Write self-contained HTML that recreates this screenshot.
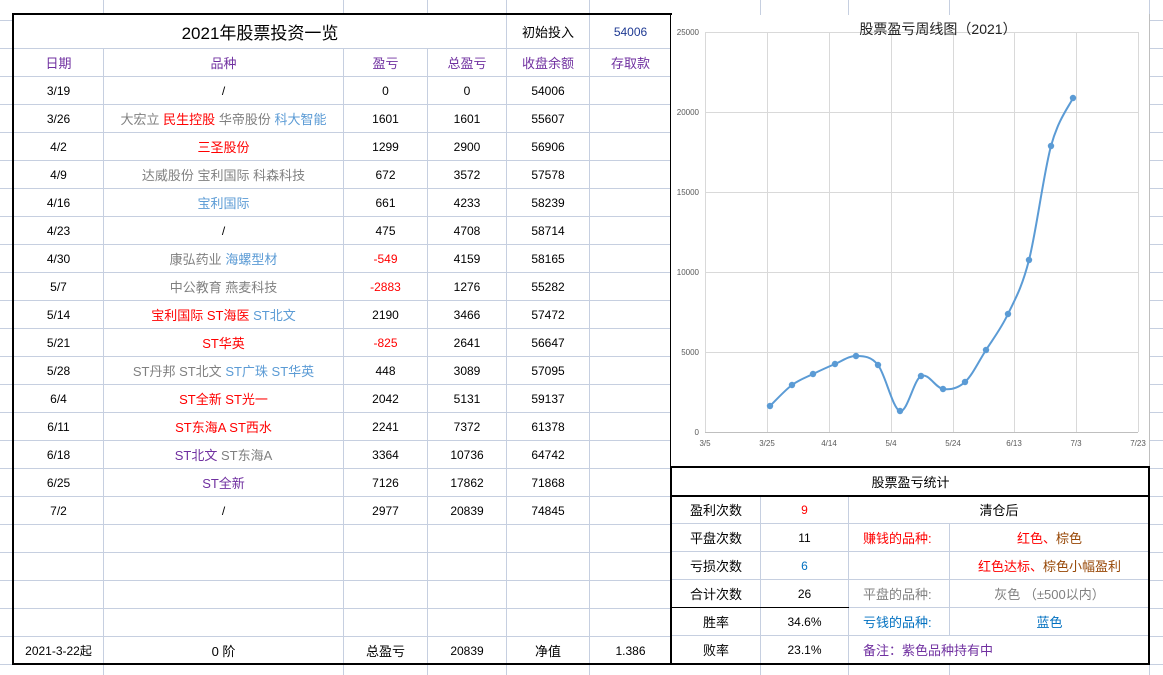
<!DOCTYPE html>
<html><head><meta charset="utf-8">
<style>
*{margin:0;padding:0;box-sizing:border-box}
body{width:1163px;height:675px;position:relative;overflow:hidden;background:#fff;
font-family:"Liberation Sans","Noto Sans CJK SC",sans-serif;font-size:12px;color:#000}
.bg{position:absolute;left:0;top:0;width:1163px;height:675px;
background-image:linear-gradient(#c6cfe0 1px,transparent 1px);background-size:100% 28px;background-position:0 20px}
.vl{position:absolute;top:0;width:1px;background:#c6cfe0;height:675px}
table{position:absolute;border-collapse:collapse;table-layout:fixed;background:#fff}
td{border:1px solid #c6cfe0;text-align:center;vertical-align:middle;white-space:nowrap;padding:0;height:28px;overflow:hidden}
.r{color:#f00}.g{color:#808080}.b{color:#5b9bd5}.p{color:#7030a0}.bl{color:#0070c0}.br{color:#974706}
.frame{position:absolute;border:2px solid #000;pointer-events:none}
</style></head><body>
<div class="bg"></div>
<div class="vl" style="left:103px"></div><div class="vl" style="left:343px"></div>
<div class="vl" style="left:427px"></div><div class="vl" style="left:506px"></div>
<div class="vl" style="left:589px"></div><div class="vl" style="left:760px"></div>
<div class="vl" style="left:848px"></div><div class="vl" style="left:949px"></div>
<div class="vl" style="left:1149px"></div>

<table style="left:13px;top:14px;width:658px">
<colgroup><col style="width:90px"><col style="width:240px"><col style="width:84px"><col style="width:79px"><col style="width:83px"><col style="width:82px"></colgroup>
<tr style="height:34px"><td colspan="4" style="height:34px;font-size:17px">2021年股票投资一览</td><td style="border-left:1px solid #000;font-size:13px">初始投入</td><td style="color:#1f3a93">54006</td></tr>
<tr class="p" style="font-size:13px"><td>日期</td><td>品种</td><td>盈亏</td><td>总盈亏</td><td style="border-left:1px solid #000">收盘余额</td><td>存取款</td></tr>
<tr><td>3/19</td><td>/</td><td>0</td><td>0</td><td style="border-left:1px solid #000">54006</td><td></td></tr>
<tr><td>3/26</td><td style="font-size:13px"><span class="g">大宏立</span> <span class="r">民生控股</span> <span class="g">华帝股份</span> <span class="b">科大智能</span></td><td>1601</td><td>1601</td><td style="border-left:1px solid #000">55607</td><td></td></tr>
<tr><td>4/2</td><td class="r" style="font-size:13px">三圣股份</td><td>1299</td><td>2900</td><td style="border-left:1px solid #000">56906</td><td></td></tr>
<tr><td>4/9</td><td class="g" style="font-size:13px">达威股份 宝利国际 科森科技</td><td>672</td><td>3572</td><td style="border-left:1px solid #000">57578</td><td></td></tr>
<tr><td>4/16</td><td class="b" style="font-size:13px">宝利国际</td><td>661</td><td>4233</td><td style="border-left:1px solid #000">58239</td><td></td></tr>
<tr><td>4/23</td><td>/</td><td>475</td><td>4708</td><td style="border-left:1px solid #000">58714</td><td></td></tr>
<tr><td>4/30</td><td style="font-size:13px"><span class="g">康弘药业</span> <span class="b">海螺型材</span></td><td class="r">-549</td><td>4159</td><td style="border-left:1px solid #000">58165</td><td></td></tr>
<tr><td>5/7</td><td class="g" style="font-size:13px">中公教育 燕麦科技</td><td class="r">-2883</td><td>1276</td><td style="border-left:1px solid #000">55282</td><td></td></tr>
<tr><td>5/14</td><td style="font-size:13px"><span class="r">宝利国际 ST海医</span> <span class="b">ST北文</span></td><td>2190</td><td>3466</td><td style="border-left:1px solid #000">57472</td><td></td></tr>
<tr><td>5/21</td><td class="r" style="font-size:13px">ST华英</td><td class="r">-825</td><td>2641</td><td style="border-left:1px solid #000">56647</td><td></td></tr>
<tr><td>5/28</td><td style="font-size:13px"><span class="g">ST丹邦 ST北文</span> <span class="b">ST广珠 ST华英</span></td><td>448</td><td>3089</td><td style="border-left:1px solid #000">57095</td><td></td></tr>
<tr><td>6/4</td><td class="r" style="font-size:13px">ST全新 ST光一</td><td>2042</td><td>5131</td><td style="border-left:1px solid #000">59137</td><td></td></tr>
<tr><td>6/11</td><td class="r" style="font-size:13px">ST东海A ST西水</td><td>2241</td><td>7372</td><td style="border-left:1px solid #000">61378</td><td></td></tr>
<tr><td>6/18</td><td style="font-size:13px"><span class="p">ST北文</span> <span class="g">ST东海A</span></td><td>3364</td><td>10736</td><td style="border-left:1px solid #000">64742</td><td></td></tr>
<tr><td>6/25</td><td class="p" style="font-size:13px">ST全新</td><td>7126</td><td>17862</td><td style="border-left:1px solid #000">71868</td><td></td></tr>
<tr><td>7/2</td><td>/</td><td>2977</td><td>20839</td><td style="border-left:1px solid #000">74845</td><td></td></tr>
<tr><td></td><td></td><td></td><td></td><td style="border-left:1px solid #000"></td><td></td></tr>
<tr><td></td><td></td><td></td><td></td><td style="border-left:1px solid #000"></td><td></td></tr>
<tr><td></td><td></td><td></td><td></td><td style="border-left:1px solid #000"></td><td></td></tr>
<tr><td></td><td></td><td></td><td></td><td style="border-left:1px solid #000"></td><td></td></tr>
<tr><td>2021-3-22起</td><td style="font-size:13px">0 阶</td><td style="font-size:13px">总盈亏</td><td>20839</td><td style="border-left:1px solid #000;font-size:13px">净值</td><td>1.386</td></tr>
</table>
<div class="frame" style="left:12px;top:13px;width:660px;height:652px"></div>

<svg style="position:absolute;left:0;top:0" width="1163" height="675">
<rect x="671" y="15" width="478" height="451" fill="#fff"/>
<g stroke="#d9d9d9" stroke-width="1">
<line x1="705" y1="32.5" x2="1138" y2="32.5"/><line x1="705" y1="112.5" x2="1138" y2="112.5"/>
<line x1="705" y1="192.5" x2="1138" y2="192.5"/><line x1="705" y1="272.5" x2="1138" y2="272.5"/>
<line x1="705" y1="352.5" x2="1138" y2="352.5"/>
<line x1="705.5" y1="32" x2="705.5" y2="432"/><line x1="767.5" y1="32" x2="767.5" y2="432"/>
<line x1="829.5" y1="32" x2="829.5" y2="432"/><line x1="891.5" y1="32" x2="891.5" y2="432"/>
<line x1="953.5" y1="32" x2="953.5" y2="432"/><line x1="1014.5" y1="32" x2="1014.5" y2="432"/>
<line x1="1076.5" y1="32" x2="1076.5" y2="432"/><line x1="1138.5" y1="32" x2="1138.5" y2="432"/>
</g>
<line x1="705" y1="432.5" x2="1138" y2="432.5" stroke="#bfbfbf"/>
<text x="938" y="34" font-size="14" text-anchor="middle" font-family="Liberation Sans,Noto Sans CJK SC,sans-serif" fill="#222">股票盈亏周线图（2021）</text>
<g font-size="8" fill="#595959" text-anchor="end" font-family="Liberation Sans,sans-serif">
<text x="699" y="35">25000</text><text x="699" y="115">20000</text><text x="699" y="195">15000</text>
<text x="699" y="275">10000</text><text x="699" y="355">5000</text><text x="699" y="435">0</text>
</g>
<g font-size="8" fill="#595959" text-anchor="middle" font-family="Liberation Sans,sans-serif">
<text x="705" y="446">3/5</text><text x="767" y="446">3/25</text><text x="829" y="446">4/14</text>
<text x="891" y="446">5/4</text><text x="953" y="446">5/24</text><text x="1014" y="446">6/13</text>
<text x="1076" y="446">7/3</text><text x="1138" y="446">7/23</text>
</g>
<path fill="none" stroke="#5b9bd5" stroke-width="2" d="M770,406 C773.7,402.5 784.8,390.3 792,385 C799.2,379.7 805.8,377.5 813,374 C820.2,370.5 827.8,367 835,364 C842.2,361 848.8,355.8 856,356 C863.2,356.2 870.7,355.8 878,365 C885.3,374.2 892.8,409.2 900,411 C907.2,412.8 913.8,379.7 921,376 C928.2,372.3 935.7,388 943,389 C950.3,390 957.8,388.5 965,382 C972.2,375.5 978.8,361.3 986,350 C993.2,338.7 1000.8,329 1008,314 C1015.2,299 1021.8,288 1029,260 C1036.2,232 1043.7,173 1051,146 C1058.3,119 1069.3,106 1073,98"/>
<g fill="#5b9bd5">
<circle cx="770" cy="406" r="3.2"/><circle cx="792" cy="385" r="3.2"/><circle cx="813" cy="374" r="3.2"/>
<circle cx="835" cy="364" r="3.2"/><circle cx="856" cy="356" r="3.2"/><circle cx="878" cy="365" r="3.2"/>
<circle cx="900" cy="411" r="3.2"/><circle cx="921" cy="376" r="3.2"/><circle cx="943" cy="389" r="3.2"/>
<circle cx="965" cy="382" r="3.2"/><circle cx="986" cy="350" r="3.2"/><circle cx="1008" cy="314" r="3.2"/>
<circle cx="1029" cy="260" r="3.2"/><circle cx="1051" cy="146" r="3.2"/><circle cx="1073" cy="98" r="3.2"/>
</g>
<line x1="1149.5" y1="14" x2="1149.5" y2="467" stroke="#bfbfbf"/>
</svg>

<table style="left:671px;top:467px;width:478px;font-size:13px">
<colgroup><col style="width:89px"><col style="width:88px"><col style="width:101px"><col style="width:200px"></colgroup>
<tr><td colspan="4" style="border-bottom:2px solid #000">股票盈亏统计</td></tr>
<tr><td>盈利次数</td><td class="r" style="font-size:12px">9</td><td colspan="2" style="border-left:1px solid #000">清仓后</td></tr>
<tr><td>平盘次数</td><td style="font-size:12px">11</td><td class="r" style="border-left:1px solid #000;text-align:left;padding-left:14px">赚钱的品种:</td><td><span class="r">红色、</span><span class="br">棕色</span></td></tr>
<tr><td>亏损次数</td><td class="bl" style="font-size:12px">6</td><td style="border-left:1px solid #000"></td><td><span class="r">红色达标、</span><span class="br">棕色小幅盈利</span></td></tr>
<tr><td style="border-bottom:1px solid #000">合计次数</td><td style="border-bottom:1px solid #000;font-size:12px">26</td><td class="g" style="border-left:1px solid #000;text-align:left;padding-left:14px">平盘的品种:</td><td class="g">灰色 （±500以内）</td></tr>
<tr><td>胜率</td><td style="font-size:12px">34.6%</td><td class="bl" style="border-left:1px solid #000;text-align:left;padding-left:14px">亏钱的品种:</td><td class="bl">蓝色</td></tr>
<tr><td>败率</td><td style="font-size:12px">23.1%</td><td colspan="2" class="p" style="border-left:1px solid #000;text-align:left;padding-left:14px">备注：紫色品种持有中</td></tr>
</table>
<div class="frame" style="left:670px;top:466px;width:480px;height:199px"></div>
</body></html>
